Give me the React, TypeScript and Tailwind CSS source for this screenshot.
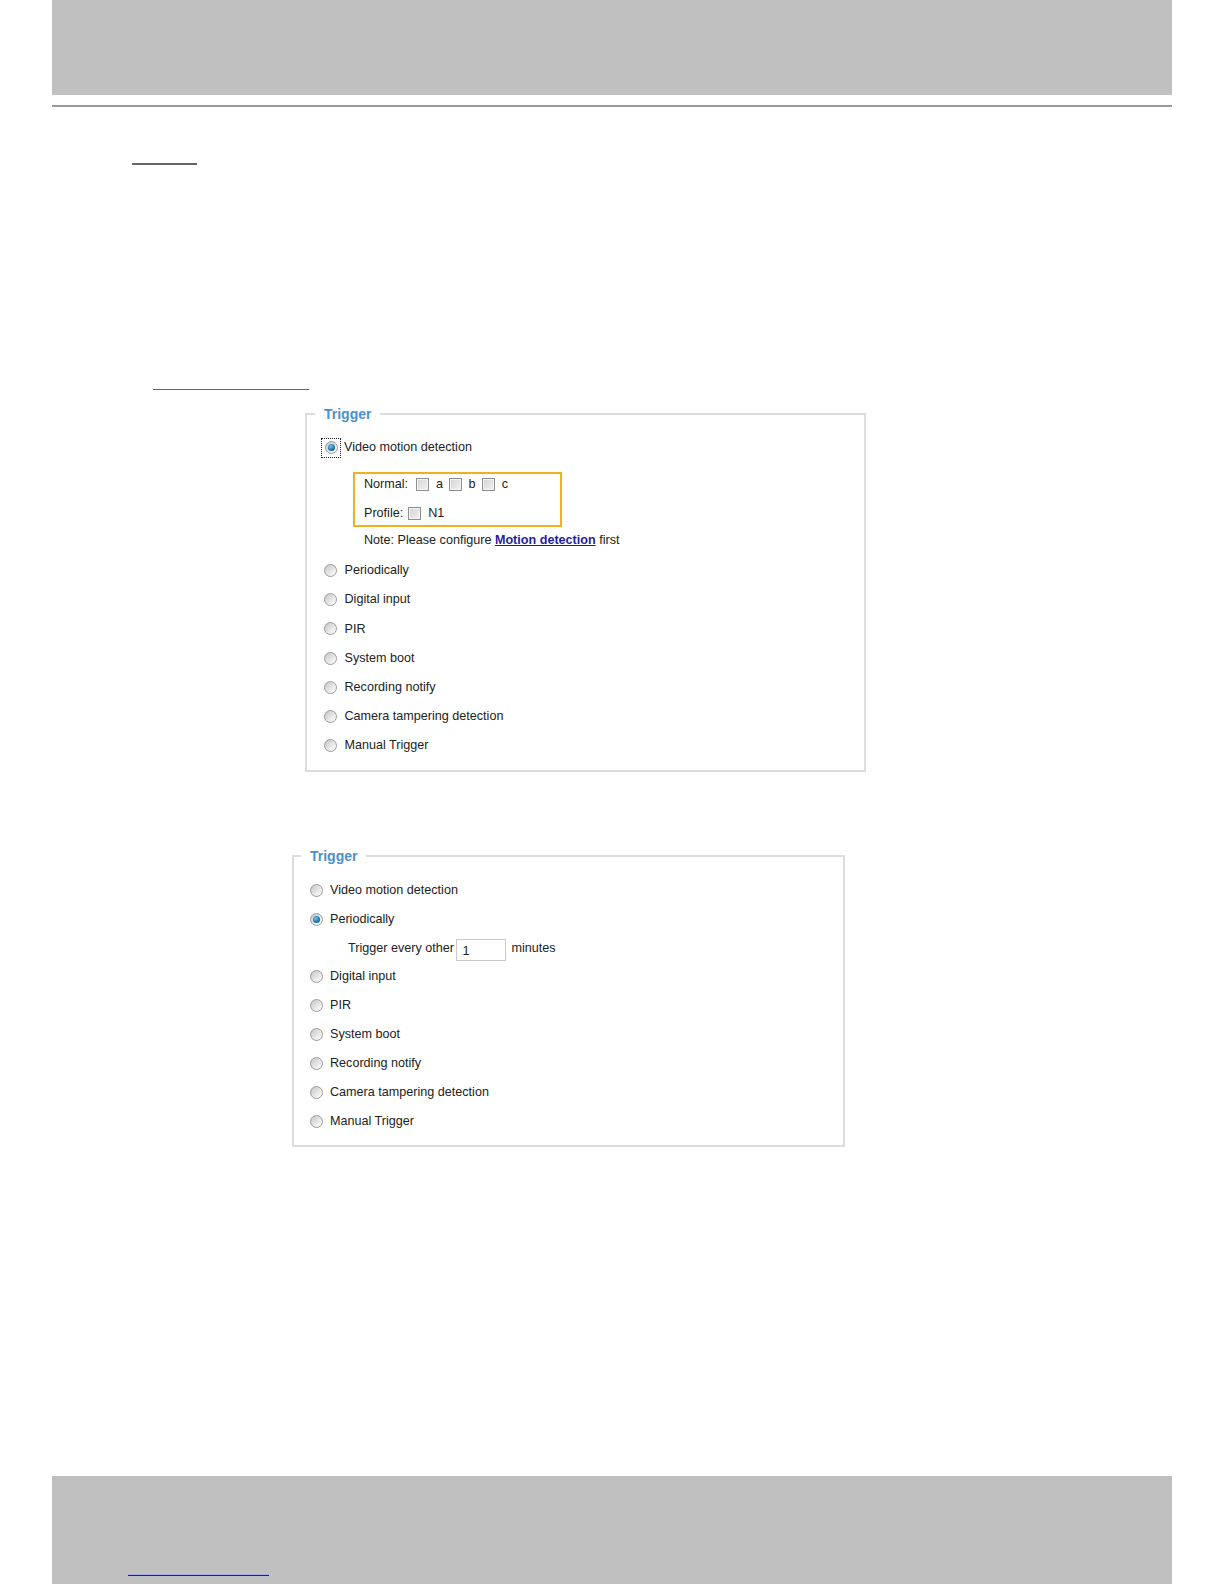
import React from "react";

const font = "font-['Liberation_Sans',Arial,sans-serif]";

function Radio({ checked = false }: { checked?: boolean }) {
  return (
    <span className="flex h-[13px] w-[13px] shrink-0 items-center justify-center rounded-full border border-[#9b9b9b] bg-[linear-gradient(135deg,#c4c4c4,#f0f0f0_70%,#ffffff)]">
      {checked && (
        <span className="h-[7px] w-[7px] rounded-full bg-[radial-gradient(circle_at_40%_35%,#7cc3ea,#1f78b0_55%,#0b4470)]" />
      )}
    </span>
  );
}

function Check({ className = "" }: { className?: string }) {
  return (
    <span
      className={
        "inline-block h-[13px] w-[13px] shrink-0 border border-[#8f8f8f] bg-[linear-gradient(135deg,#d2d2d2,#f4f4f4)] shadow-[inset_0_0_0_1px_#f2f2f2] " +
        className
      }
    />
  );
}

function Option({ label, checked = false, h = "h-[29px]" }: { label: string; checked?: boolean; h?: string }) {
  return (
    <div className={"flex items-center " + h}>
      <Radio checked={checked} />
      <span className="ml-[7.5px]">{label}</span>
    </div>
  );
}

function Legend({ className = "" }: { className?: string }) {
  return (
    <legend className={"px-[9px] text-[14px] font-bold leading-[16px] text-[#4a8fcc] " + className}>
      Trigger
    </legend>
  );
}

export default function App() {
  const rest = ["Digital input", "PIR", "System boot", "Recording notify", "Camera tampering detection", "Manual Trigger"];

  return (
    <div className={"flex h-[1584px] w-[1224px] flex-col bg-white text-[12.6px] text-[#222] " + font}>
      {/* page header */}
      <div className="ml-[52px] h-[95px] w-[1120px] shrink-0 bg-[#c0c0c0]" />
      <div className="ml-[52px] mt-[10px] h-[2px] w-[1120px] shrink-0 bg-[#9a9a9a]" />

      <div className="ml-[132px] mt-[56px] h-[2px] w-[65px] shrink-0 bg-[#666]" />
      <div className="ml-[153px] mt-[224px] h-px w-[156px] shrink-0 bg-[#666]" />

      {/* trigger: video motion detection */}
      <fieldset className="ml-[305px] mt-[16px] w-[561px] shrink-0 border-2 border-[#dcdcdc] pb-[10px] pl-[17px] pt-[11px]">
        <Legend className="-ml-[9px]" />
        <div className="flex h-[29px] items-center">
          <span className="-ml-[3px] flex h-[20px] w-[20px] items-center justify-center border border-dotted border-[#222]">
            <Radio checked />
          </span>
          <span className="ml-[3px]">Video motion detection</span>
        </div>

        <div className="ml-[29px] mt-[10px] flex h-[55px] w-[209px] flex-col border-2 border-[#f0b21c] pl-[9px] pt-[2px]">
          <div className="flex h-[16px] items-center">
            <span>Normal:</span>
            <Check className="ml-[8px]" />
            <span className="ml-[7px]">a</span>
            <Check className="ml-[6px]" />
            <span className="ml-[6.5px]">b</span>
            <Check className="ml-[6px]" />
            <span className="ml-[7px]">c</span>
          </div>
          <div className="mt-[13px] flex h-[16px] items-center">
            <span>Profile:</span>
            <Check className="ml-[5px]" />
            <span className="ml-[7px]">N1</span>
          </div>
        </div>

        <div className="mt-[5px] flex h-[16px] items-center pl-[40px]">
          <span className="whitespace-pre">Note: Please configure </span>
          <span className="font-bold text-[#1f1f9c] underline">Motion detection</span>
          <span className="whitespace-pre"> first</span>
        </div>

        <div className="mt-[8px]">
          <Option label="Periodically" h="h-[29.2px]" />
          {rest.map((r) => (
            <Option key={r} label={r} h="h-[29.2px]" />
          ))}
        </div>
      </fieldset>

      {/* trigger: periodically */}
      <fieldset className="ml-[292px] mt-[76px] w-[553px] shrink-0 border-2 border-[#dcdcdc] pb-[9px] pl-[15.5px] pt-[11.5px]">
        <Legend className="-ml-[8.5px]" />
        <Option label="Video motion detection" h="h-[28.9px]" />
        <Option label="Periodically" checked h="h-[28.9px]" />
        <div className="flex h-[28.9px] items-center pl-[38.5px]">
          <span>Trigger every other</span>
          <span className="ml-[2.5px] mt-[4px] flex h-[22px] w-[50px] items-center border border-[#c9c9c9] pl-[5px] pt-[2px]">
            1
          </span>
          <span className="ml-[5px]">minutes</span>
        </div>
        {rest.map((r) => (
          <Option key={r} label={r} h="h-[28.9px]" />
        ))}
      </fieldset>

      {/* page footer */}
      <div className="mt-auto ml-[52px] flex h-[108px] w-[1120px] shrink-0 flex-col bg-[#c0c0c0]">
        <div className="ml-[76px] mt-auto mb-[8px] h-[2px] w-[141px] border-t border-[#a8a8f0] bg-[#1a1aa8]" />
      </div>
    </div>
  );
}
